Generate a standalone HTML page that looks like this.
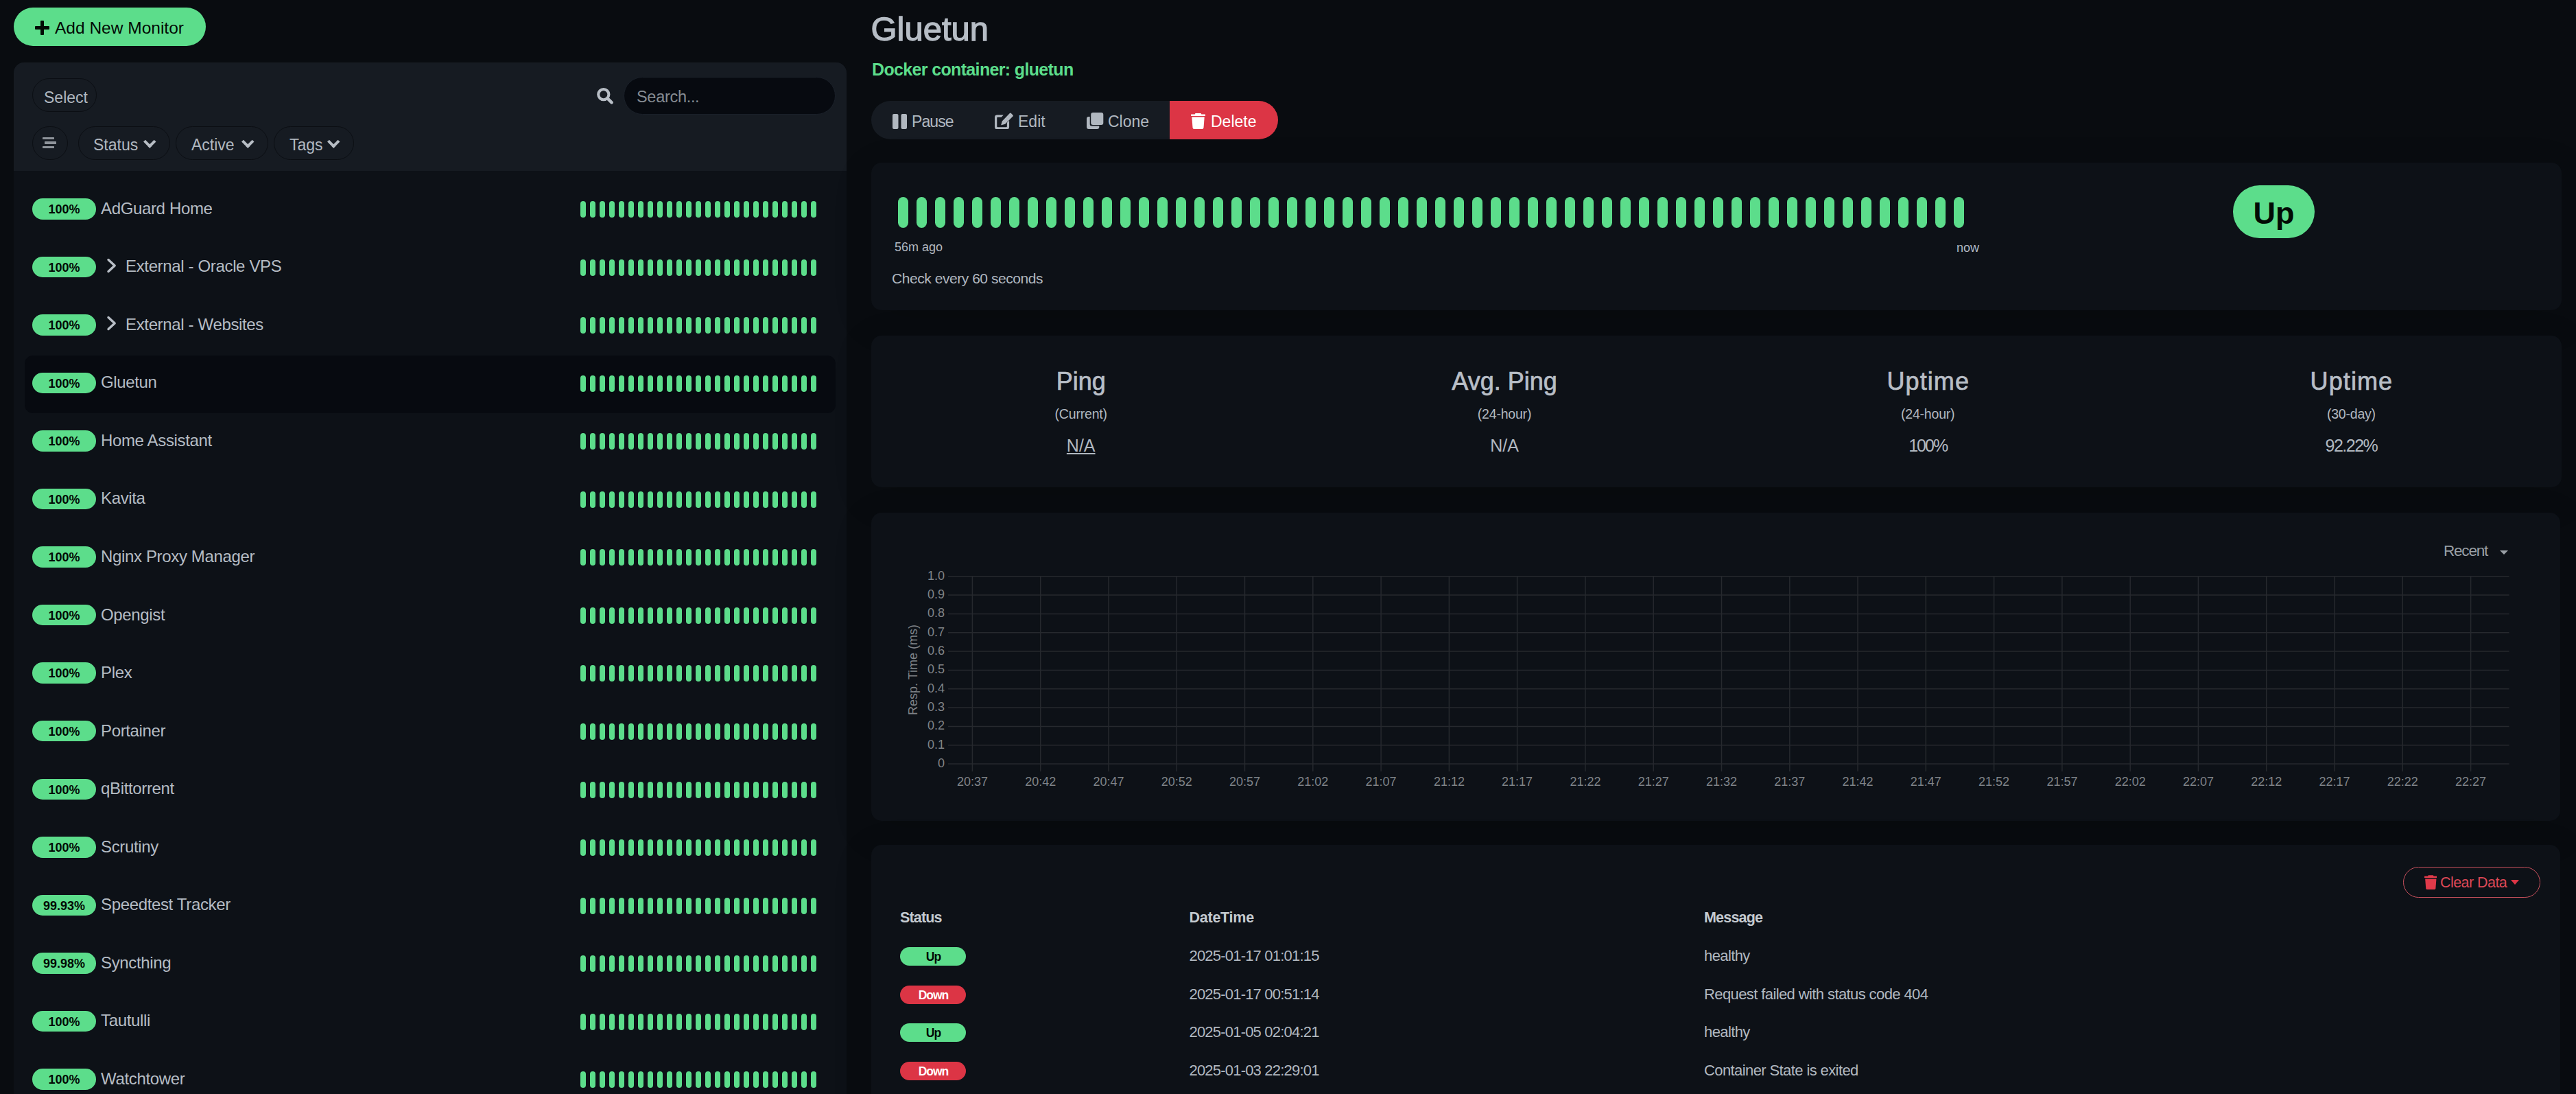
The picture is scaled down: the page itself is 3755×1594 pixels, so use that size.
<!DOCTYPE html>
<html><head><meta charset="utf-8"><title>Uptime Kuma</title>
<style>
html,body{margin:0;padding:0}
body{width:3755px;height:1594px;overflow:hidden;position:relative;background:#090c10;font-family:"Liberation Sans",sans-serif;color:#b1b8c0}
body>*{position:absolute}
.addbtn{left:20px;top:11px;width:280px;height:56px;border-radius:28px;background:#5cdd8b;color:#020b05;font-size:24.5px;line-height:24.5px}
.addbtn{text-indent:0}
.addbtn .plus{position:absolute;left:31px;top:19px;width:21px;height:20.5px}
.addbtn .plus:before{content:"";position:absolute;left:8.3px;top:0;width:4.5px;height:20.5px;background:#020b05;border-radius:1px}
.addbtn .plus:after{content:"";position:absolute;left:0;top:8px;width:21px;height:4.5px;background:#020b05;border-radius:1px}
.addbtn{padding:0}
.addbtn:after{content:"";}
.addbtn{white-space:nowrap}
.addbtn{box-sizing:border-box;padding-left:60px;padding-top:17.5px}
.listpanel{left:20px;top:91px;width:1214px;height:1600px;border-radius:15px;background:#0d1117}
.lhead{left:20px;top:91px;width:1214px;height:158px;border-radius:15px 15px 0 0;background:#161b22}
.selbtn{left:47px;top:114px;width:94px;height:49px;box-sizing:border-box;border:1.8px solid #0b0e13;border-radius:25px;font-size:23px;line-height:23px;padding-left:16px;padding-top:15.5px}
.searchico{left:869px;top:127px}
.search{left:909px;top:111.5px;width:309px;height:55px;box-sizing:border-box;border-radius:27.5px;background:#070a10;border:1.5px solid #1a2029;color:#868c93;font-size:23.5px;line-height:23.5px;padding-left:18px;padding-top:17px;letter-spacing:-0.3px}
.fbtn{top:184px;height:49px;box-sizing:border-box;border:1.8px solid #0b0e13;border-radius:25px;font-size:23px;line-height:23px;padding-top:15px}
.hamb{left:47px;width:52px}
.hamb span{position:absolute;height:3.4px;background:#8e939a;border-radius:0.5px}
.hamb span:nth-child(1){top:14.7px;left:14.4px;width:17.1px}
.hamb span:nth-child(2){top:21.3px;left:17px;width:16.5px}
.hamb span:nth-child(3){top:27.8px;left:14.4px;width:17.1px}
.fstatus{left:114px;width:134px;padding-left:21px}
.factive{left:256px;width:135px;padding-left:22px}
.ftags{left:399px;width:117px;padding-left:22px}
.chev{position:absolute;top:14.8px;width:8.5px;height:8.5px;border-right:4.2px solid #b8bec5;border-bottom:4.2px solid #b8bec5;transform:rotate(45deg)}
.fstatus .chev{left:97px}
.factive .chev{left:98px}
.ftags .chev{left:80px}
.selrow{left:35.5px;width:1182.5px;height:83.5px;border-radius:12px;background:#070a10}
.badge{left:47px;width:93px;height:30.5px;border-radius:15.25px;background:#5cdd8b;color:#020b05;font-weight:bold;font-size:18px;line-height:33.5px;text-align:center;overflow:hidden}
.mname{left:147px;font-size:24px;line-height:24px;white-space:nowrap;margin-top:2.7px;color:#b5bcc4;letter-spacing:-0.35px}
.mname.grp{left:183px}
.gchev{left:155px}
.sbeats{left:845.8px;width:350px;height:24px}
.sbeats i,.bbeats i{position:absolute;top:0;display:block;background:#5cdd8b}
.sbeats i{width:8px;height:24px;border-radius:4px}
.title{left:1269.5px;top:17.9px;font-size:49px;line-height:49px;color:#b6bdc5;white-space:nowrap;-webkit-text-stroke:1.3px #b6bdc5;letter-spacing:0px}
.subtitle{left:1271px;top:88.5px;font-size:25px;line-height:25px;font-weight:bold;color:#5cdd8b;letter-spacing:-0.65px;white-space:nowrap}
.bg-normal{left:1270px;top:147px;width:470px;height:56px;border-radius:28px 0 0 28px;background:#161b22}
.bg-del{left:1705px;top:147px;width:158px;height:56px;border-radius:0 28px 28px 0;background:#dc3545}
.bt{top:165px;height:25px;font-size:23px;line-height:23px;white-space:nowrap}
.bt svg{position:absolute;left:0;top:0}
.bpause{left:1301px;padding-left:28px;padding-top:1px;letter-spacing:-0.9px}
.bpause svg{top:1px}
.bedit{left:1450px;padding-left:34px;padding-top:1px}
.bclone{left:1584px;padding-left:31px;padding-top:1px}
.bdel{left:1736px;padding-left:29px;padding-top:1px;color:#fff}
.panel{border-radius:15px;background:#0d1117;box-shadow:0 15px 60px rgba(0,0,0,0.12)}
.beatpanel{left:1270px;top:237px;width:2464px;height:215px}
.statspanel{left:1270px;top:489px;width:2464px;height:221px}
.chartpanel{left:1270px;top:746.5px;width:2462px;height:449.5px}
.evpanel{left:1270px;top:1230.6px;width:2462px;height:500px}
.bbeats{left:1308.7px;top:287px;width:1600px;height:45px}
.bbeats i{width:15.4px;height:45px;border-radius:7.7px}
.ago{left:1304px;top:351.3px;font-size:18px;line-height:18px;white-space:nowrap}
.now{left:2852px;top:352.3px;font-size:18px;line-height:18px;white-space:nowrap}
.checkevery{left:1300px;top:394.9px;font-size:21px;line-height:21px;letter-spacing:-0.45px;white-space:nowrap}
.upbadge{left:3255px;top:270px;width:119px;height:77px;border-radius:38.5px;background:#5cdd8b;color:#020b05;font-weight:bold;font-size:45px;line-height:82px;text-align:center;overflow:hidden}
.stat{top:530px;width:616px;text-align:center;white-space:nowrap}
.sh{position:absolute;left:0;width:616px;top:8.1px;font-size:36px;line-height:36px;color:#b8bec6;-webkit-text-stroke:0.7px #b8bec6}
.ss{position:absolute;left:0;width:616px;top:63.5px;font-size:19.5px;line-height:19.5px;letter-spacing:-0.2px}
.sv{position:absolute;left:0;width:616px;top:107px;font-size:25px;line-height:25px}
.sv.ul{text-decoration:underline;text-underline-offset:2px;text-decoration-thickness:1.5px}
.recent{left:3562px;top:791.5px;font-size:22.5px;line-height:22.5px;color:#9aa0a6;white-space:nowrap;letter-spacing:-1.2px}
.caret{position:absolute;left:82px;top:10px;width:0;height:0;border-left:6px solid transparent;border-right:6px solid transparent;border-top:6.8px solid #9aa0a6}
.chart{left:0;top:0;pointer-events:none}
.chart text{font-family:"Liberation Sans",sans-serif;fill:#7f8388}
.chart .yl,.chart .xl{font-size:18px}
.chart .yt{font-size:18px}
.cleardata{left:3503px;top:1263px;width:200px;height:45px;box-sizing:border-box;border:1.5px solid #c8505c;border-radius:23px;color:#dc4856;font-size:21.5px;line-height:21.5px;padding-left:53px;padding-top:12.3px;white-space:nowrap;letter-spacing:-0.55px}
.cleardata svg{position:absolute;left:29.5px;top:10.5px}
.rcaret{position:absolute;left:155.5px;top:17.5px;width:0;height:0;border-left:6px solid transparent;border-right:6px solid transparent;border-top:7px solid #dc3545}
.th{top:1326.5px;font-size:21.5px;line-height:21.5px;font-weight:bold;white-space:nowrap;color:#c4cad0;letter-spacing:-0.75px}
.th1{left:1312px;letter-spacing:-0.85px}.th2{left:1733.5px;letter-spacing:-0.25px}.th3{left:2484px;letter-spacing:-0.8px}
.eb{left:1312px;width:96px;height:27px;border-radius:13.5px;font-weight:bold;font-size:17.5px;line-height:29px;text-align:center;overflow:hidden;letter-spacing:-1px;text-indent:1px}
.eb.up{background:#5cdd8b;color:#020b05}
.eb.down{background:#dc3545;color:#fff}
.td{font-size:22px;line-height:22px;white-space:nowrap;margin-top:2px;color:#b1b8c0}
.td2{left:1733.5px;letter-spacing:-0.8px}.td3{left:2484px;letter-spacing:-0.6px}

.sv.v3{letter-spacing:-2px}.sv.v4{letter-spacing:-1.5px}
.sh.h3,.sh.h4{letter-spacing:1.1px;text-indent:1.1px}

</style></head><body>
<div class="addbtn"><span class="plus"></span>Add New Monitor</div>
<div class="listpanel"></div><div class="lhead"></div>
<div class="selbtn">Select</div>
<svg class="searchico" width="26" height="26" viewBox="0 0 26 26"><circle cx="10.8" cy="10.6" r="7.6" fill="none" stroke="#b8bec6" stroke-width="4.1"/><line x1="16.6" y1="16.4" x2="22.6" y2="22.4" stroke="#b8bec6" stroke-width="4.6" stroke-linecap="round"/></svg>
<div class="search">Search...</div>
<div class="fbtn hamb"><span></span><span></span><span></span></div>
<div class="fbtn fstatus">Status<i class="chev"></i></div>
<div class="fbtn factive">Active<i class="chev"></i></div>
<div class="fbtn ftags">Tags<i class="chev"></i></div>
<div class="badge" style="top:289.0px">100%</div>
<div class="mname" style="top:289.0px">AdGuard Home</div>
<div class="sbeats" style="top:293.0px"><i style="left:0.0px"></i><i style="left:14.0px"></i><i style="left:28.0px"></i><i style="left:42.0px"></i><i style="left:56.0px"></i><i style="left:70.0px"></i><i style="left:84.0px"></i><i style="left:98.0px"></i><i style="left:112.0px"></i><i style="left:126.0px"></i><i style="left:140.0px"></i><i style="left:154.0px"></i><i style="left:168.0px"></i><i style="left:182.0px"></i><i style="left:196.0px"></i><i style="left:210.0px"></i><i style="left:224.0px"></i><i style="left:238.0px"></i><i style="left:252.0px"></i><i style="left:266.0px"></i><i style="left:280.0px"></i><i style="left:294.0px"></i><i style="left:308.0px"></i><i style="left:322.0px"></i><i style="left:336.0px"></i></div>
<div class="badge" style="top:373.6px">100%</div>
<svg class="gchev" style="top:375.9px" width="16" height="22" viewBox="0 0 16 22"><polyline points="3,2.5 12.2,11 3,19.5" fill="none" stroke="#b8bec6" stroke-width="3.4" stroke-linecap="round" stroke-linejoin="round"/></svg>
<div class="mname grp" style="top:373.6px">External - Oracle VPS</div>
<div class="sbeats" style="top:377.6px"><i style="left:0.0px"></i><i style="left:14.0px"></i><i style="left:28.0px"></i><i style="left:42.0px"></i><i style="left:56.0px"></i><i style="left:70.0px"></i><i style="left:84.0px"></i><i style="left:98.0px"></i><i style="left:112.0px"></i><i style="left:126.0px"></i><i style="left:140.0px"></i><i style="left:154.0px"></i><i style="left:168.0px"></i><i style="left:182.0px"></i><i style="left:196.0px"></i><i style="left:210.0px"></i><i style="left:224.0px"></i><i style="left:238.0px"></i><i style="left:252.0px"></i><i style="left:266.0px"></i><i style="left:280.0px"></i><i style="left:294.0px"></i><i style="left:308.0px"></i><i style="left:322.0px"></i><i style="left:336.0px"></i></div>
<div class="badge" style="top:458.1px">100%</div>
<svg class="gchev" style="top:460.4px" width="16" height="22" viewBox="0 0 16 22"><polyline points="3,2.5 12.2,11 3,19.5" fill="none" stroke="#b8bec6" stroke-width="3.4" stroke-linecap="round" stroke-linejoin="round"/></svg>
<div class="mname grp" style="top:458.1px">External - Websites</div>
<div class="sbeats" style="top:462.1px"><i style="left:0.0px"></i><i style="left:14.0px"></i><i style="left:28.0px"></i><i style="left:42.0px"></i><i style="left:56.0px"></i><i style="left:70.0px"></i><i style="left:84.0px"></i><i style="left:98.0px"></i><i style="left:112.0px"></i><i style="left:126.0px"></i><i style="left:140.0px"></i><i style="left:154.0px"></i><i style="left:168.0px"></i><i style="left:182.0px"></i><i style="left:196.0px"></i><i style="left:210.0px"></i><i style="left:224.0px"></i><i style="left:238.0px"></i><i style="left:252.0px"></i><i style="left:266.0px"></i><i style="left:280.0px"></i><i style="left:294.0px"></i><i style="left:308.0px"></i><i style="left:322.0px"></i><i style="left:336.0px"></i></div>
<div class="selrow" style="top:518.1px"></div>
<div class="badge" style="top:542.6px">100%</div>
<div class="mname" style="top:542.6px">Gluetun</div>
<div class="sbeats" style="top:546.6px"><i style="left:0.0px"></i><i style="left:14.0px"></i><i style="left:28.0px"></i><i style="left:42.0px"></i><i style="left:56.0px"></i><i style="left:70.0px"></i><i style="left:84.0px"></i><i style="left:98.0px"></i><i style="left:112.0px"></i><i style="left:126.0px"></i><i style="left:140.0px"></i><i style="left:154.0px"></i><i style="left:168.0px"></i><i style="left:182.0px"></i><i style="left:196.0px"></i><i style="left:210.0px"></i><i style="left:224.0px"></i><i style="left:238.0px"></i><i style="left:252.0px"></i><i style="left:266.0px"></i><i style="left:280.0px"></i><i style="left:294.0px"></i><i style="left:308.0px"></i><i style="left:322.0px"></i><i style="left:336.0px"></i></div>
<div class="badge" style="top:627.2px">100%</div>
<div class="mname" style="top:627.2px">Home Assistant</div>
<div class="sbeats" style="top:631.2px"><i style="left:0.0px"></i><i style="left:14.0px"></i><i style="left:28.0px"></i><i style="left:42.0px"></i><i style="left:56.0px"></i><i style="left:70.0px"></i><i style="left:84.0px"></i><i style="left:98.0px"></i><i style="left:112.0px"></i><i style="left:126.0px"></i><i style="left:140.0px"></i><i style="left:154.0px"></i><i style="left:168.0px"></i><i style="left:182.0px"></i><i style="left:196.0px"></i><i style="left:210.0px"></i><i style="left:224.0px"></i><i style="left:238.0px"></i><i style="left:252.0px"></i><i style="left:266.0px"></i><i style="left:280.0px"></i><i style="left:294.0px"></i><i style="left:308.0px"></i><i style="left:322.0px"></i><i style="left:336.0px"></i></div>
<div class="badge" style="top:711.8px">100%</div>
<div class="mname" style="top:711.8px">Kavita</div>
<div class="sbeats" style="top:715.8px"><i style="left:0.0px"></i><i style="left:14.0px"></i><i style="left:28.0px"></i><i style="left:42.0px"></i><i style="left:56.0px"></i><i style="left:70.0px"></i><i style="left:84.0px"></i><i style="left:98.0px"></i><i style="left:112.0px"></i><i style="left:126.0px"></i><i style="left:140.0px"></i><i style="left:154.0px"></i><i style="left:168.0px"></i><i style="left:182.0px"></i><i style="left:196.0px"></i><i style="left:210.0px"></i><i style="left:224.0px"></i><i style="left:238.0px"></i><i style="left:252.0px"></i><i style="left:266.0px"></i><i style="left:280.0px"></i><i style="left:294.0px"></i><i style="left:308.0px"></i><i style="left:322.0px"></i><i style="left:336.0px"></i></div>
<div class="badge" style="top:796.3px">100%</div>
<div class="mname" style="top:796.3px">Nginx Proxy Manager</div>
<div class="sbeats" style="top:800.3px"><i style="left:0.0px"></i><i style="left:14.0px"></i><i style="left:28.0px"></i><i style="left:42.0px"></i><i style="left:56.0px"></i><i style="left:70.0px"></i><i style="left:84.0px"></i><i style="left:98.0px"></i><i style="left:112.0px"></i><i style="left:126.0px"></i><i style="left:140.0px"></i><i style="left:154.0px"></i><i style="left:168.0px"></i><i style="left:182.0px"></i><i style="left:196.0px"></i><i style="left:210.0px"></i><i style="left:224.0px"></i><i style="left:238.0px"></i><i style="left:252.0px"></i><i style="left:266.0px"></i><i style="left:280.0px"></i><i style="left:294.0px"></i><i style="left:308.0px"></i><i style="left:322.0px"></i><i style="left:336.0px"></i></div>
<div class="badge" style="top:880.9px">100%</div>
<div class="mname" style="top:880.9px">Opengist</div>
<div class="sbeats" style="top:884.9px"><i style="left:0.0px"></i><i style="left:14.0px"></i><i style="left:28.0px"></i><i style="left:42.0px"></i><i style="left:56.0px"></i><i style="left:70.0px"></i><i style="left:84.0px"></i><i style="left:98.0px"></i><i style="left:112.0px"></i><i style="left:126.0px"></i><i style="left:140.0px"></i><i style="left:154.0px"></i><i style="left:168.0px"></i><i style="left:182.0px"></i><i style="left:196.0px"></i><i style="left:210.0px"></i><i style="left:224.0px"></i><i style="left:238.0px"></i><i style="left:252.0px"></i><i style="left:266.0px"></i><i style="left:280.0px"></i><i style="left:294.0px"></i><i style="left:308.0px"></i><i style="left:322.0px"></i><i style="left:336.0px"></i></div>
<div class="badge" style="top:965.4px">100%</div>
<div class="mname" style="top:965.4px">Plex</div>
<div class="sbeats" style="top:969.4px"><i style="left:0.0px"></i><i style="left:14.0px"></i><i style="left:28.0px"></i><i style="left:42.0px"></i><i style="left:56.0px"></i><i style="left:70.0px"></i><i style="left:84.0px"></i><i style="left:98.0px"></i><i style="left:112.0px"></i><i style="left:126.0px"></i><i style="left:140.0px"></i><i style="left:154.0px"></i><i style="left:168.0px"></i><i style="left:182.0px"></i><i style="left:196.0px"></i><i style="left:210.0px"></i><i style="left:224.0px"></i><i style="left:238.0px"></i><i style="left:252.0px"></i><i style="left:266.0px"></i><i style="left:280.0px"></i><i style="left:294.0px"></i><i style="left:308.0px"></i><i style="left:322.0px"></i><i style="left:336.0px"></i></div>
<div class="badge" style="top:1049.9px">100%</div>
<div class="mname" style="top:1049.9px">Portainer</div>
<div class="sbeats" style="top:1053.9px"><i style="left:0.0px"></i><i style="left:14.0px"></i><i style="left:28.0px"></i><i style="left:42.0px"></i><i style="left:56.0px"></i><i style="left:70.0px"></i><i style="left:84.0px"></i><i style="left:98.0px"></i><i style="left:112.0px"></i><i style="left:126.0px"></i><i style="left:140.0px"></i><i style="left:154.0px"></i><i style="left:168.0px"></i><i style="left:182.0px"></i><i style="left:196.0px"></i><i style="left:210.0px"></i><i style="left:224.0px"></i><i style="left:238.0px"></i><i style="left:252.0px"></i><i style="left:266.0px"></i><i style="left:280.0px"></i><i style="left:294.0px"></i><i style="left:308.0px"></i><i style="left:322.0px"></i><i style="left:336.0px"></i></div>
<div class="badge" style="top:1134.5px">100%</div>
<div class="mname" style="top:1134.5px">qBittorrent</div>
<div class="sbeats" style="top:1138.5px"><i style="left:0.0px"></i><i style="left:14.0px"></i><i style="left:28.0px"></i><i style="left:42.0px"></i><i style="left:56.0px"></i><i style="left:70.0px"></i><i style="left:84.0px"></i><i style="left:98.0px"></i><i style="left:112.0px"></i><i style="left:126.0px"></i><i style="left:140.0px"></i><i style="left:154.0px"></i><i style="left:168.0px"></i><i style="left:182.0px"></i><i style="left:196.0px"></i><i style="left:210.0px"></i><i style="left:224.0px"></i><i style="left:238.0px"></i><i style="left:252.0px"></i><i style="left:266.0px"></i><i style="left:280.0px"></i><i style="left:294.0px"></i><i style="left:308.0px"></i><i style="left:322.0px"></i><i style="left:336.0px"></i></div>
<div class="badge" style="top:1219.0px">100%</div>
<div class="mname" style="top:1219.0px">Scrutiny</div>
<div class="sbeats" style="top:1223.0px"><i style="left:0.0px"></i><i style="left:14.0px"></i><i style="left:28.0px"></i><i style="left:42.0px"></i><i style="left:56.0px"></i><i style="left:70.0px"></i><i style="left:84.0px"></i><i style="left:98.0px"></i><i style="left:112.0px"></i><i style="left:126.0px"></i><i style="left:140.0px"></i><i style="left:154.0px"></i><i style="left:168.0px"></i><i style="left:182.0px"></i><i style="left:196.0px"></i><i style="left:210.0px"></i><i style="left:224.0px"></i><i style="left:238.0px"></i><i style="left:252.0px"></i><i style="left:266.0px"></i><i style="left:280.0px"></i><i style="left:294.0px"></i><i style="left:308.0px"></i><i style="left:322.0px"></i><i style="left:336.0px"></i></div>
<div class="badge" style="top:1303.6px">99.93%</div>
<div class="mname" style="top:1303.6px">Speedtest Tracker</div>
<div class="sbeats" style="top:1307.6px"><i style="left:0.0px"></i><i style="left:14.0px"></i><i style="left:28.0px"></i><i style="left:42.0px"></i><i style="left:56.0px"></i><i style="left:70.0px"></i><i style="left:84.0px"></i><i style="left:98.0px"></i><i style="left:112.0px"></i><i style="left:126.0px"></i><i style="left:140.0px"></i><i style="left:154.0px"></i><i style="left:168.0px"></i><i style="left:182.0px"></i><i style="left:196.0px"></i><i style="left:210.0px"></i><i style="left:224.0px"></i><i style="left:238.0px"></i><i style="left:252.0px"></i><i style="left:266.0px"></i><i style="left:280.0px"></i><i style="left:294.0px"></i><i style="left:308.0px"></i><i style="left:322.0px"></i><i style="left:336.0px"></i></div>
<div class="badge" style="top:1388.1px">99.98%</div>
<div class="mname" style="top:1388.1px">Syncthing</div>
<div class="sbeats" style="top:1392.1px"><i style="left:0.0px"></i><i style="left:14.0px"></i><i style="left:28.0px"></i><i style="left:42.0px"></i><i style="left:56.0px"></i><i style="left:70.0px"></i><i style="left:84.0px"></i><i style="left:98.0px"></i><i style="left:112.0px"></i><i style="left:126.0px"></i><i style="left:140.0px"></i><i style="left:154.0px"></i><i style="left:168.0px"></i><i style="left:182.0px"></i><i style="left:196.0px"></i><i style="left:210.0px"></i><i style="left:224.0px"></i><i style="left:238.0px"></i><i style="left:252.0px"></i><i style="left:266.0px"></i><i style="left:280.0px"></i><i style="left:294.0px"></i><i style="left:308.0px"></i><i style="left:322.0px"></i><i style="left:336.0px"></i></div>
<div class="badge" style="top:1472.7px">100%</div>
<div class="mname" style="top:1472.7px">Tautulli</div>
<div class="sbeats" style="top:1476.7px"><i style="left:0.0px"></i><i style="left:14.0px"></i><i style="left:28.0px"></i><i style="left:42.0px"></i><i style="left:56.0px"></i><i style="left:70.0px"></i><i style="left:84.0px"></i><i style="left:98.0px"></i><i style="left:112.0px"></i><i style="left:126.0px"></i><i style="left:140.0px"></i><i style="left:154.0px"></i><i style="left:168.0px"></i><i style="left:182.0px"></i><i style="left:196.0px"></i><i style="left:210.0px"></i><i style="left:224.0px"></i><i style="left:238.0px"></i><i style="left:252.0px"></i><i style="left:266.0px"></i><i style="left:280.0px"></i><i style="left:294.0px"></i><i style="left:308.0px"></i><i style="left:322.0px"></i><i style="left:336.0px"></i></div>
<div class="badge" style="top:1557.2px">100%</div>
<div class="mname" style="top:1557.2px">Watchtower</div>
<div class="sbeats" style="top:1561.2px"><i style="left:0.0px"></i><i style="left:14.0px"></i><i style="left:28.0px"></i><i style="left:42.0px"></i><i style="left:56.0px"></i><i style="left:70.0px"></i><i style="left:84.0px"></i><i style="left:98.0px"></i><i style="left:112.0px"></i><i style="left:126.0px"></i><i style="left:140.0px"></i><i style="left:154.0px"></i><i style="left:168.0px"></i><i style="left:182.0px"></i><i style="left:196.0px"></i><i style="left:210.0px"></i><i style="left:224.0px"></i><i style="left:238.0px"></i><i style="left:252.0px"></i><i style="left:266.0px"></i><i style="left:280.0px"></i><i style="left:294.0px"></i><i style="left:308.0px"></i><i style="left:322.0px"></i><i style="left:336.0px"></i></div>
<div class="title">Gluetun</div>
<div class="subtitle">Docker container: gluetun</div>
<div class="bg-normal"></div><div class="bg-del"></div>
<div class="bt bpause"><svg width="22" height="22" viewBox="0 0 22 22"><rect x="0" y="0" width="8.5" height="22" rx="2" fill="#b1b8c0"/><rect x="12.5" y="0" width="8.5" height="22" rx="2" fill="#b1b8c0"/></svg>Pause</div>
<div class="bt bedit"><svg width="27.5" height="24.5" viewBox="0 0 28 25" style="top:-1.2px"><path d="M0 7 Q0 3.5 3.5 3.5 H13 L9.8 6.8 H4.5 Q3.3 6.8 3.3 8 V20.5 Q3.3 21.7 4.5 21.7 H17 Q18.2 21.7 18.2 20.5 V15 L21.5 11.7 V21.5 Q21.5 25 18 25 H3.5 Q0 25 0 21.5 Z" fill="#b1b8c0"/><path d="M22.3 1 Q23.3 0 24.3 1 L27 3.7 Q28 4.7 27 5.7 L15.5 17.2 L10 18.7 Q9.3 18.9 9.5 18.2 L11 12.7 Z" fill="#b1b8c0"/></svg>Edit</div>
<div class="bt bclone"><svg width="25" height="24" viewBox="0 0 25 24" style="top:-1px"><rect x="6.2" y="0" width="18.1" height="18" rx="3" fill="#b1b8c0"/><path d="M0 9 Q0 6 3 6 H4.7 V17 Q4.7 19.5 7.2 19.5 H18.3 V21 Q18.3 24 15.3 24 H3 Q0 24 0 21 Z" fill="#b1b8c0"/></svg>Clone</div>
<div class="bt bdel"><svg width="21" height="23" viewBox="0 0 21 23" style="top:-0.4px"><path d="M6.5 0 H14.5 L15.3 1.5 H20.3 Q21 1.5 21 2.2 V4 H0 V2.2 Q0 1.5 0.7 1.5 H5.7 Z" fill="#fff"/><path d="M1.3 5.5 H19.7 L18.5 21 Q18.3 23 16.3 23 H4.7 Q2.7 23 2.5 21 Z" fill="#fff"/></svg>Delete</div>
<div class="panel beatpanel"></div>
<div class="bbeats"><i style="left:0.00px"></i><i style="left:27.00px"></i><i style="left:54.00px"></i><i style="left:81.00px"></i><i style="left:108.00px"></i><i style="left:135.00px"></i><i style="left:162.00px"></i><i style="left:189.00px"></i><i style="left:216.00px"></i><i style="left:243.00px"></i><i style="left:270.00px"></i><i style="left:297.00px"></i><i style="left:324.00px"></i><i style="left:351.00px"></i><i style="left:378.00px"></i><i style="left:405.00px"></i><i style="left:432.00px"></i><i style="left:459.00px"></i><i style="left:486.00px"></i><i style="left:513.00px"></i><i style="left:540.00px"></i><i style="left:567.00px"></i><i style="left:594.00px"></i><i style="left:621.00px"></i><i style="left:648.00px"></i><i style="left:675.00px"></i><i style="left:702.00px"></i><i style="left:729.00px"></i><i style="left:756.00px"></i><i style="left:783.00px"></i><i style="left:810.00px"></i><i style="left:837.00px"></i><i style="left:864.00px"></i><i style="left:891.00px"></i><i style="left:918.00px"></i><i style="left:945.00px"></i><i style="left:972.00px"></i><i style="left:999.00px"></i><i style="left:1026.00px"></i><i style="left:1053.00px"></i><i style="left:1080.00px"></i><i style="left:1107.00px"></i><i style="left:1134.00px"></i><i style="left:1161.00px"></i><i style="left:1188.00px"></i><i style="left:1215.00px"></i><i style="left:1242.00px"></i><i style="left:1269.00px"></i><i style="left:1296.00px"></i><i style="left:1323.00px"></i><i style="left:1350.00px"></i><i style="left:1377.00px"></i><i style="left:1404.00px"></i><i style="left:1431.00px"></i><i style="left:1458.00px"></i><i style="left:1485.00px"></i><i style="left:1512.00px"></i><i style="left:1539.00px"></i></div>
<div class="ago">56m ago</div><div class="now">now</div>
<div class="checkevery">Check every 60 seconds</div>
<div class="upbadge">Up</div>
<div class="panel statspanel"></div>
<div class="stat" style="left:1267.7px"><div class="sh h1">Ping</div><div class="ss">(Current)</div><div class="sv ul v1">N/A</div></div>
<div class="stat" style="left:1885.0px"><div class="sh h2">Avg. Ping</div><div class="ss">(24-hour)</div><div class="sv v2">N/A</div></div>
<div class="stat" style="left:2502.2px"><div class="sh h3">Uptime</div><div class="ss">(24-hour)</div><div class="sv v3">100%</div></div>
<div class="stat" style="left:3119.4px"><div class="sh h4">Uptime</div><div class="ss">(30-day)</div><div class="sv v4">92.22%</div></div>
<div class="panel chartpanel"></div>
<div class="recent">Recent<i class="caret"></i></div>
<svg class="chart" width="3755" height="1594" viewBox="0 0 3755 1594"><line x1="1382.0" y1="839.8" x2="3657.5" y2="839.8" stroke="#26292e" stroke-width="1.5"/><text x="1377" y="844.8" text-anchor="end" class="yl">1.0</text><line x1="1382.0" y1="867.1" x2="3657.5" y2="867.1" stroke="#26292e" stroke-width="1.5"/><text x="1377" y="872.1" text-anchor="end" class="yl">0.9</text><line x1="1382.0" y1="894.4" x2="3657.5" y2="894.4" stroke="#26292e" stroke-width="1.5"/><text x="1377" y="899.4" text-anchor="end" class="yl">0.8</text><line x1="1382.0" y1="921.8" x2="3657.5" y2="921.8" stroke="#26292e" stroke-width="1.5"/><text x="1377" y="926.8" text-anchor="end" class="yl">0.7</text><line x1="1382.0" y1="949.1" x2="3657.5" y2="949.1" stroke="#26292e" stroke-width="1.5"/><text x="1377" y="954.1" text-anchor="end" class="yl">0.6</text><line x1="1382.0" y1="976.4" x2="3657.5" y2="976.4" stroke="#26292e" stroke-width="1.5"/><text x="1377" y="981.4" text-anchor="end" class="yl">0.5</text><line x1="1382.0" y1="1003.7" x2="3657.5" y2="1003.7" stroke="#26292e" stroke-width="1.5"/><text x="1377" y="1008.7" text-anchor="end" class="yl">0.4</text><line x1="1382.0" y1="1031.0" x2="3657.5" y2="1031.0" stroke="#26292e" stroke-width="1.5"/><text x="1377" y="1036.0" text-anchor="end" class="yl">0.3</text><line x1="1382.0" y1="1058.4" x2="3657.5" y2="1058.4" stroke="#26292e" stroke-width="1.5"/><text x="1377" y="1063.4" text-anchor="end" class="yl">0.2</text><line x1="1382.0" y1="1085.7" x2="3657.5" y2="1085.7" stroke="#26292e" stroke-width="1.5"/><text x="1377" y="1090.7" text-anchor="end" class="yl">0.1</text><line x1="1382.0" y1="1113.0" x2="3657.5" y2="1113.0" stroke="#26292e" stroke-width="1.5"/><text x="1377" y="1118.0" text-anchor="end" class="yl">0</text><line x1="1417.4" y1="839.8" x2="1417.4" y2="1124.0" stroke="#26292e" stroke-width="1.5"/><text x="1417.4" y="1145" text-anchor="middle" class="xl">20:37</text><line x1="1516.7" y1="839.8" x2="1516.7" y2="1124.0" stroke="#26292e" stroke-width="1.5"/><text x="1516.7" y="1145" text-anchor="middle" class="xl">20:42</text><line x1="1616.0" y1="839.8" x2="1616.0" y2="1124.0" stroke="#26292e" stroke-width="1.5"/><text x="1616.0" y="1145" text-anchor="middle" class="xl">20:47</text><line x1="1715.2" y1="839.8" x2="1715.2" y2="1124.0" stroke="#26292e" stroke-width="1.5"/><text x="1715.2" y="1145" text-anchor="middle" class="xl">20:52</text><line x1="1814.5" y1="839.8" x2="1814.5" y2="1124.0" stroke="#26292e" stroke-width="1.5"/><text x="1814.5" y="1145" text-anchor="middle" class="xl">20:57</text><line x1="1913.8" y1="839.8" x2="1913.8" y2="1124.0" stroke="#26292e" stroke-width="1.5"/><text x="1913.8" y="1145" text-anchor="middle" class="xl">21:02</text><line x1="2013.1" y1="839.8" x2="2013.1" y2="1124.0" stroke="#26292e" stroke-width="1.5"/><text x="2013.1" y="1145" text-anchor="middle" class="xl">21:07</text><line x1="2112.4" y1="839.8" x2="2112.4" y2="1124.0" stroke="#26292e" stroke-width="1.5"/><text x="2112.4" y="1145" text-anchor="middle" class="xl">21:12</text><line x1="2211.6" y1="839.8" x2="2211.6" y2="1124.0" stroke="#26292e" stroke-width="1.5"/><text x="2211.6" y="1145" text-anchor="middle" class="xl">21:17</text><line x1="2310.9" y1="839.8" x2="2310.9" y2="1124.0" stroke="#26292e" stroke-width="1.5"/><text x="2310.9" y="1145" text-anchor="middle" class="xl">21:22</text><line x1="2410.2" y1="839.8" x2="2410.2" y2="1124.0" stroke="#26292e" stroke-width="1.5"/><text x="2410.2" y="1145" text-anchor="middle" class="xl">21:27</text><line x1="2509.5" y1="839.8" x2="2509.5" y2="1124.0" stroke="#26292e" stroke-width="1.5"/><text x="2509.5" y="1145" text-anchor="middle" class="xl">21:32</text><line x1="2608.8" y1="839.8" x2="2608.8" y2="1124.0" stroke="#26292e" stroke-width="1.5"/><text x="2608.8" y="1145" text-anchor="middle" class="xl">21:37</text><line x1="2708.0" y1="839.8" x2="2708.0" y2="1124.0" stroke="#26292e" stroke-width="1.5"/><text x="2708.0" y="1145" text-anchor="middle" class="xl">21:42</text><line x1="2807.3" y1="839.8" x2="2807.3" y2="1124.0" stroke="#26292e" stroke-width="1.5"/><text x="2807.3" y="1145" text-anchor="middle" class="xl">21:47</text><line x1="2906.6" y1="839.8" x2="2906.6" y2="1124.0" stroke="#26292e" stroke-width="1.5"/><text x="2906.6" y="1145" text-anchor="middle" class="xl">21:52</text><line x1="3005.9" y1="839.8" x2="3005.9" y2="1124.0" stroke="#26292e" stroke-width="1.5"/><text x="3005.9" y="1145" text-anchor="middle" class="xl">21:57</text><line x1="3105.2" y1="839.8" x2="3105.2" y2="1124.0" stroke="#26292e" stroke-width="1.5"/><text x="3105.2" y="1145" text-anchor="middle" class="xl">22:02</text><line x1="3204.4" y1="839.8" x2="3204.4" y2="1124.0" stroke="#26292e" stroke-width="1.5"/><text x="3204.4" y="1145" text-anchor="middle" class="xl">22:07</text><line x1="3303.7" y1="839.8" x2="3303.7" y2="1124.0" stroke="#26292e" stroke-width="1.5"/><text x="3303.7" y="1145" text-anchor="middle" class="xl">22:12</text><line x1="3403.0" y1="839.8" x2="3403.0" y2="1124.0" stroke="#26292e" stroke-width="1.5"/><text x="3403.0" y="1145" text-anchor="middle" class="xl">22:17</text><line x1="3502.3" y1="839.8" x2="3502.3" y2="1124.0" stroke="#26292e" stroke-width="1.5"/><text x="3502.3" y="1145" text-anchor="middle" class="xl">22:22</text><line x1="3601.6" y1="839.8" x2="3601.6" y2="1124.0" stroke="#26292e" stroke-width="1.5"/><text x="3601.6" y="1145" text-anchor="middle" class="xl">22:27</text><text transform="translate(1337,976) rotate(-90)" text-anchor="middle" class="yt">Resp. Time (ms)</text></svg>
<div class="panel evpanel"></div>
<div class="cleardata"><svg width="18.6" height="21.3" viewBox="0 0 21 23.5"><path d="M6.5 0 H14.5 L15.3 1.5 H20.3 Q21 1.5 21 2.2 V4.3 H0 V2.2 Q0 1.5 0.7 1.5 H5.7 Z" fill="#e03a4a"/><path d="M1.3 5.8 H19.7 L18.5 21.5 Q18.3 23.5 16.3 23.5 H4.7 Q2.7 23.5 2.5 21.5 Z" fill="#e03a4a"/></svg>Clear Data<i class="rcaret"></i></div>
<div class="th th1">Status</div><div class="th th2">DateTime</div><div class="th th3">Message</div>
<div class="eb up" style="top:1380.0px">Up</div>
<div class="td td2" style="top:1380.0px">2025-01-17 01:01:15</div><div class="td td3" style="top:1380.0px">healthy</div>
<div class="eb down" style="top:1435.7px">Down</div>
<div class="td td2" style="top:1435.7px">2025-01-17 00:51:14</div><div class="td td3" style="top:1435.7px">Request failed with status code 404</div>
<div class="eb up" style="top:1491.3px">Up</div>
<div class="td td2" style="top:1491.3px">2025-01-05 02:04:21</div><div class="td td3" style="top:1491.3px">healthy</div>
<div class="eb down" style="top:1547.0px">Down</div>
<div class="td td2" style="top:1547.0px">2025-01-03 22:29:01</div><div class="td td3" style="top:1547.0px">Container State is exited</div>
</body></html>
